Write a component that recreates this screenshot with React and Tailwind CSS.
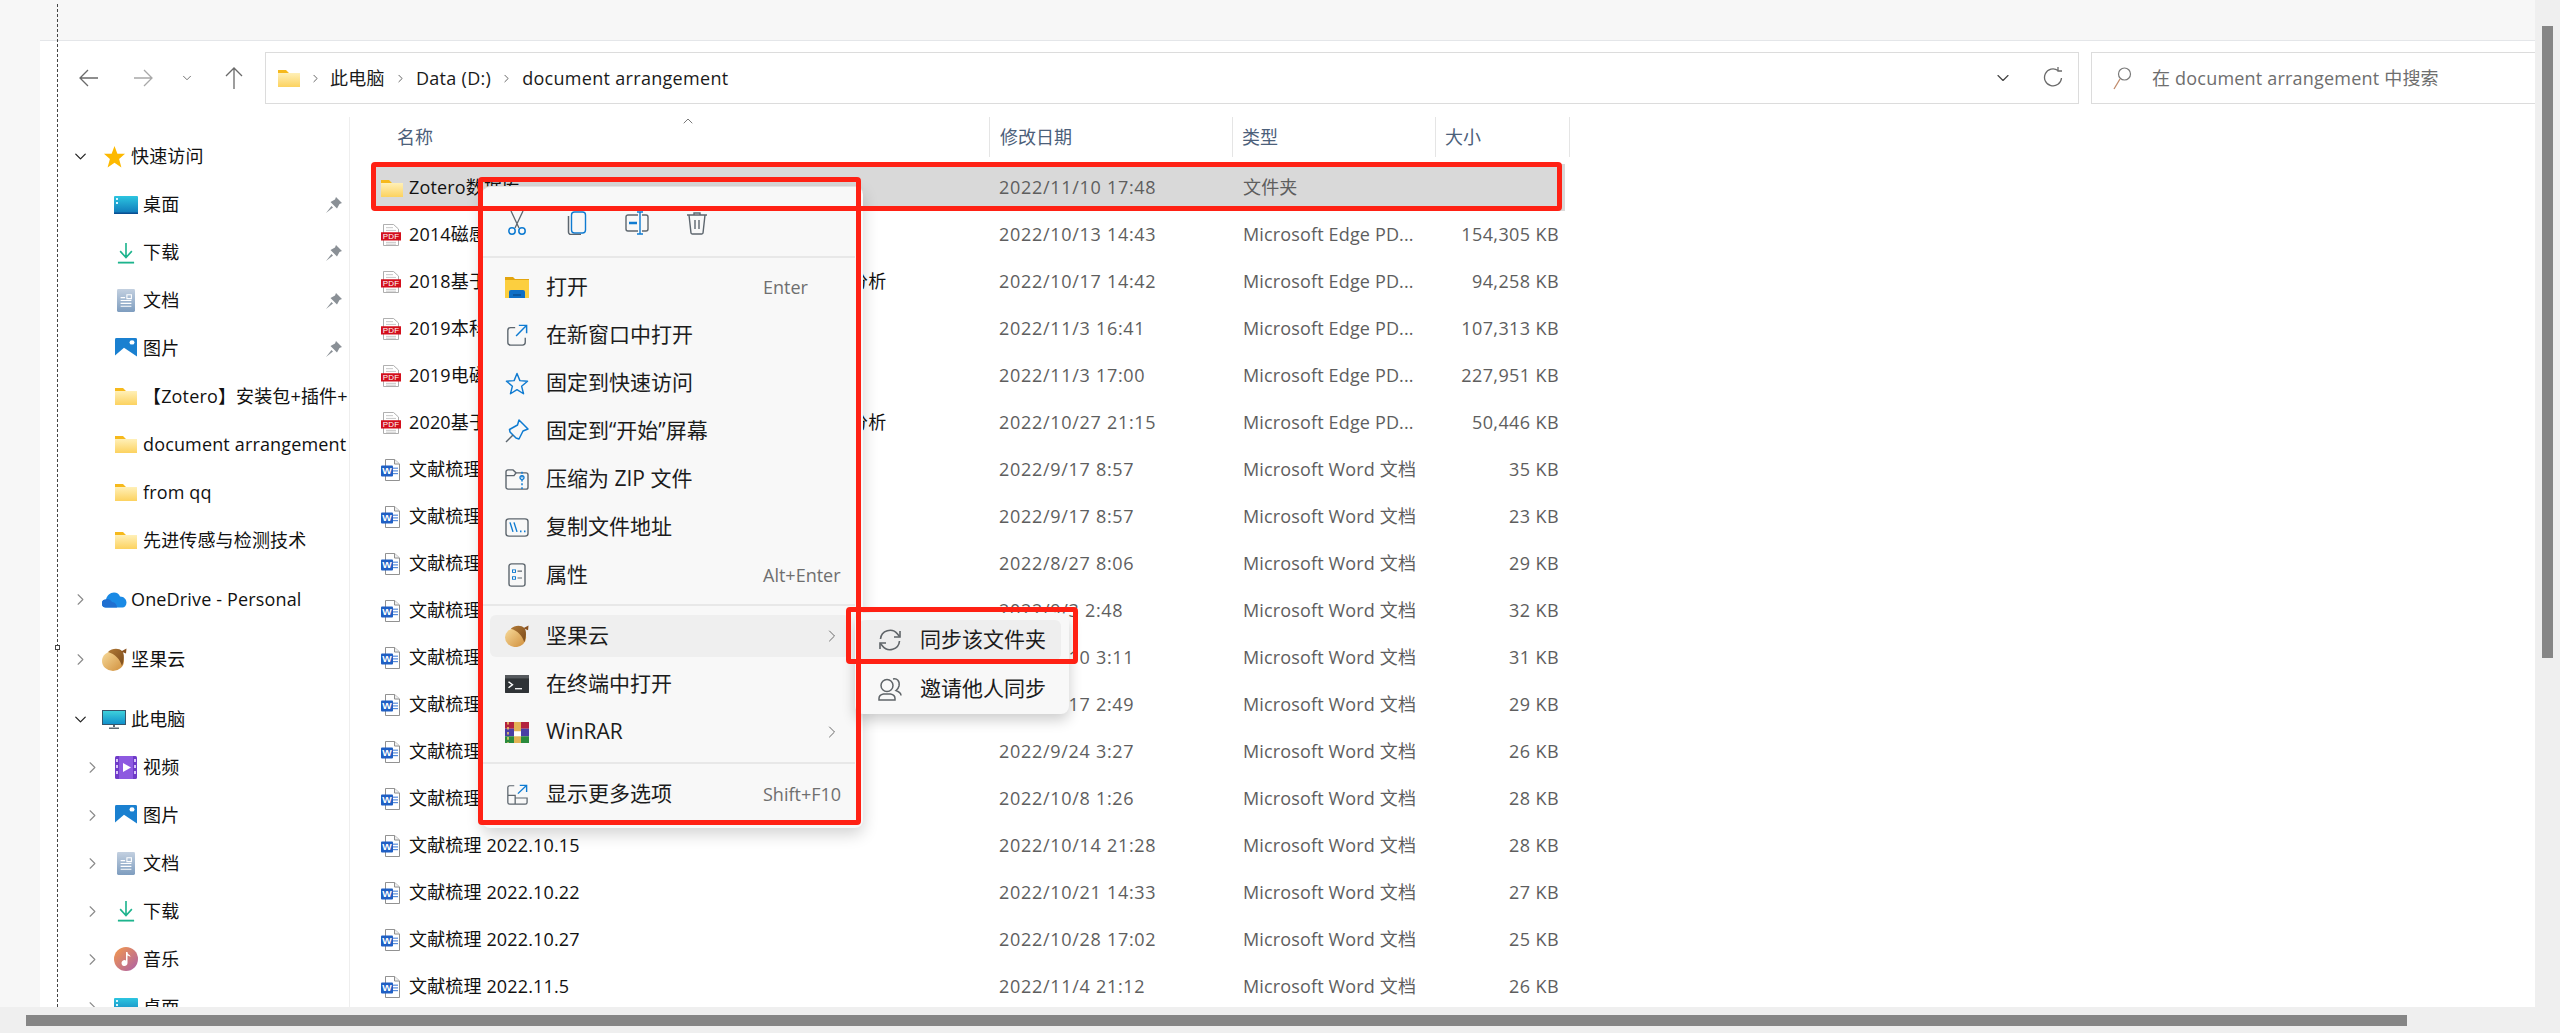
import { ChevronDown, ChevronRight, ChevronUp } from "lucide-react";

const files = [
  ["folder", "Zotero数据库", "2022/11/10 17:48", "文件夹", ""],
  ["pdf", "2014磁感应成像技术综述", "2022/10/13 14:43", "Microsoft Edge PD...", "154,305 KB"],
  ["pdf", "2018基于文献计量学的电磁无损检测技术研究进展趋势分析", "2022/10/17 14:42", "Microsoft Edge PD...", "94,258 KB"],
  ["pdf", "2019本科毕业论文", "2022/11/3 16:41", "Microsoft Edge PD...", "107,313 KB"],
  ["pdf", "2019电磁层析成像", "2022/11/3 17:00", "Microsoft Edge PD...", "227,951 KB"],
  ["pdf", "2020基于文献计量学的电磁无损检测技术研究进展趋势分析", "2022/10/27 21:15", "Microsoft Edge PD...", "50,446 KB"],
  ["word", "文献梳理 2022.9.3", "2022/9/17 8:57", "Microsoft Word 文档", "35 KB"],
  ["word", "文献梳理 2022.9.10", "2022/9/17 8:57", "Microsoft Word 文档", "23 KB"],
  ["word", "文献梳理 2022.8.27", "2022/8/27 8:06", "Microsoft Word 文档", "29 KB"],
  ["word", "文献梳理 2022.9.3", "2022/9/3 2:48", "Microsoft Word 文档", "32 KB"],
  ["word", "文献梳理 2022.9.10", "2022/9/10 3:11", "Microsoft Word 文档", "31 KB"],
  ["word", "文献梳理 2022.9.17", "2022/9/17 2:49", "Microsoft Word 文档", "29 KB"],
  ["word", "文献梳理 2022.9.24", "2022/9/24 3:27", "Microsoft Word 文档", "26 KB"],
  ["word", "文献梳理 2022.10.8", "2022/10/8 1:26", "Microsoft Word 文档", "28 KB"],
  ["word", "文献梳理 2022.10.15", "2022/10/14 21:28", "Microsoft Word 文档", "28 KB"],
  ["word", "文献梳理 2022.10.22", "2022/10/21 14:33", "Microsoft Word 文档", "27 KB"],
  ["word", "文献梳理 2022.10.27", "2022/10/28 17:02", "Microsoft Word 文档", "25 KB"],
  ["word", "文献梳理 2022.11.5", "2022/11/4 21:12", "Microsoft Word 文档", "26 KB"],
];

function FolderIcon({ className = "" }) {
  return (
    <svg width="22" height="18" viewBox="0 0 22 18" className={className}>
      <defs>
        <linearGradient id="folderFront" x1="0" y1="0" x2="0" y2="1">
          <stop offset="0" stopColor="#fff0b8" />
          <stop offset="1" stopColor="#fcd25f" />
        </linearGradient>
      </defs>
      <path d="M0 1h8l3 3h11v14H0z" fill="#f6b91c" />
      <rect x="0" y="4" width="22" height="14" fill="url(#folderFront)" />
    </svg>
  );
}

function PdfIcon() {
  return (
    <svg width="20" height="22" viewBox="0 0 20 24" preserveAspectRatio="none">
      <path d="M2.500.5h10l5 5v18h-15z" fill="#fff" stroke="#a9a9a9" />
      <path d="M5 4h7M5 7h10M5 20h10M5 22h10" stroke="#c4c4c4" />
      <rect x="0" y="9" width="20" height="9" fill="#d30f1c" />
      <text x="10" y="16.600" textAnchor="middle" fontSize="8" fontFamily="Liberation Sans" fill="#fff">PDF</text>
    </svg>
  );
}

function WordIcon() {
  return (
    <svg width="20" height="22" viewBox="0 0 20 24" preserveAspectRatio="none">
      <path d="M4.500.5h9l5 5v18h-14z" fill="#fff" stroke="#8a8a8a" />
      <path d="M13.500.5v5h5" fill="#eee" stroke="#8a8a8a" />
      <path d="M12 10h5M12 13h5M12 16h5" stroke="#2f6fd0" />
      <rect x="0" y="7" width="12" height="12" rx="1" fill="#1f5fc4" />
      <text x="6" y="16.600" textAnchor="middle" fontSize="10" fontWeight="700" fontFamily="Liberation Sans" fill="#fff">W</text>
    </svg>
  );
}

function StarIcon() {
  return (
    <svg width="23" height="23" viewBox="0 0 24 24">
      <path d="M12 1l3 8h8l-6.200 5.500 2.400 9L12 18.500 4.800 23.500l2.400-9L1 9h8z" fill="#fdb900" />
    </svg>
  );
}

function DesktopIcon() {
  return (
    <svg width="24" height="18" viewBox="0 0 24 18">
      <defs>
        <linearGradient id="deskFill" x1="0" y1="0" x2="0" y2="1">
          <stop offset="0" stopColor="#2cc5e0" />
          <stop offset="1" stopColor="#0f76b8" />
        </linearGradient>
      </defs>
      <rect width="24" height="18" rx="1" fill="url(#deskFill)" />
      <path d="M2 2h2v2H2zM2 6h2v2H2z" fill="#d8f6ff" />
      <rect y="16.500" width="24" height="1.500" fill="#0a4f92" />
    </svg>
  );
}

function DownloadIcon() {
  return (
    <svg width="18" height="22" viewBox="0 0 20 24" fill="none" preserveAspectRatio="none">
      <path d="M10 1v15M3.500 10l6.500 7 6.500-7" stroke="#1db48d" strokeWidth="1.800" />
      <path d="M1 22.500h18" stroke="#1db48d" strokeWidth="2" />
    </svg>
  );
}

function DocIcon() {
  return (
    <svg width="18" height="23" viewBox="0 0 20 24" preserveAspectRatio="none">
      <defs>
        <linearGradient id="docFill" x1="0" y1="0" x2="0" y2="1">
          <stop offset="0" stopColor="#c3d0e0" />
          <stop offset="1" stopColor="#7e9dbf" />
        </linearGradient>
      </defs>
      <rect width="20" height="24" rx="1.500" fill="url(#docFill)" />
      <path d="M4 9h5M4 12h12M4 15h12M4 18h12M11 6h5v4h-5z" stroke="#fff" strokeWidth="1.200" fill="none" />
    </svg>
  );
}

function PictureIcon() {
  return (
    <svg width="22" height="21" viewBox="0 0 22 24" preserveAspectRatio="none">
      <rect width="22" height="24" rx="1.500" fill="#1a80d0" />
      <circle cx="17" cy="5" r="2.500" fill="#fff" />
      <path d="M0 24v-4l9-9 13 10v3z" fill="#fff" />
    </svg>
  );
}

function PinIcon() {
  return (
    <svg width="16" height="16" viewBox="0 0 16 16">
      <path d="M10 0l6 6-2.500 1L11 11.500 4.500 5 9 2.500zM5.500 9L0 16l7-5.500z" fill="#8a9096" />
    </svg>
  );
}

function CloudIcon() {
  return (
    <svg width="25" height="16" viewBox="0 0 25 16">
      <path d="M4 15.500a4 4 0 0 1 0-8c1-4 4-7 8-7 3 0 5 1.500 6 4 4 0 6.500 3 6.500 6 0 3-2 5-4 5z" fill="#1a8ae5" />
      <path d="M4 15.500a4 4 0 0 1-.5-8C6 6 9 8 10 10c3 0 5 3 5 5.500z" fill="#1f6fd0" />
    </svg>
  );
}

function AcornIcon({ size = 25 }) {
  return (
    <svg width={size} height={size * 0.92} viewBox="0 0 25 23">
      <defs>
        <linearGradient id="acornBody" x1="0" y1="0" x2="1" y2="1">
          <stop offset="0" stopColor="#f8dc9c" />
          <stop offset="1" stopColor="#cf8d3a" />
        </linearGradient>
        <linearGradient id="acornCap" x1="0" y1="0" x2="1" y2="1">
          <stop offset="0" stopColor="#b27a36" />
          <stop offset="1" stopColor="#7a4a1c" />
        </linearGradient>
      </defs>
      <ellipse cx="11" cy="13" rx="11" ry="10" fill="url(#acornBody)" />
      <path d="M6 4C10 0 17 0 20 3c3 3 2 10 0 15C18 11 13 6 6 4z" fill="url(#acornCap)" />
      <path d="M19 3.500l5.500-3-.5 5z" fill="#8a5220" />
    </svg>
  );
}

function MonitorIcon() {
  return (
    <svg width="24" height="19" viewBox="0 0 24 19">
      <defs>
        <linearGradient id="screenFill" x1="0" y1="0" x2="0" y2="1">
          <stop offset="0" stopColor="#3fd3dc" />
          <stop offset="1" stopColor="#0f8ecb" />
        </linearGradient>
      </defs>
      <rect x=".5" y=".5" width="23" height="14" fill="url(#screenFill)" stroke="#35556b" />
      <path d="M11 15h2v2h-2zM7 17.500h10V19H7z" fill="#5a6772" />
    </svg>
  );
}

function VideoIcon() {
  return (
    <svg width="22" height="23" viewBox="0 0 22 23">
      <rect width="22" height="23" rx="1.500" fill="#6f3bc8" />
      <rect x="4" y="0" width="14" height="23" fill="#8d59e0" />
      <path d="M1 3h2v3H1zM1 9h2v3H1zM1 15h2v3H1zM19 3h2v3h-2zM19 9h2v3h-2zM19 15h2v3h-2z" fill="#d9c6f8" />
      <path d="M8 7l8 4.500-8 4.500z" fill="#fff" />
    </svg>
  );
}

function MusicIcon() {
  return (
    <svg width="24" height="24" viewBox="0 0 24 24">
      <defs>
        <linearGradient id="musicFill" x1="0" y1="0" x2="1" y2="1">
          <stop offset="0" stopColor="#f59a4a" />
          <stop offset="1" stopColor="#ab5fa8" />
        </linearGradient>
      </defs>
      <circle cx="12" cy="12" r="12" fill="url(#musicFill)" />
      <path d="M12 5h1.500c0 3 3 2.500 3 5-1-1-2-1.500-3-1.500V16a3 3 0 1 1-1.500-2.500z" fill="#fff" />
    </svg>
  );
}

const tone = { stroke: "#5d666e", blue: "#0f7bd1" };

function ScissorsIcon() {
  return (
    <svg width="24" height="24" viewBox="0 0 24 24" fill="none">
      <path d="M10 17L18 0M14 17L6 0" stroke={tone.stroke} strokeWidth="1.300" />
      <circle cx="7" cy="20" r="3.200" stroke={tone.blue} strokeWidth="1.500" />
      <circle cx="17" cy="20" r="3.200" stroke={tone.blue} strokeWidth="1.500" />
    </svg>
  );
}

function CopyIcon() {
  return (
    <svg width="24" height="24" viewBox="0 0 24 24" fill="none">
      <rect x="6.500" y="1" width="14" height="21" rx="3" stroke={tone.blue} strokeWidth="1.400" />
      <path d="M3.500 5v16a2.500 2.500 0 0 0 2.500 2.500h10" stroke={tone.stroke} strokeWidth="1.500" />
    </svg>
  );
}

function RenameIcon() {
  return (
    <svg width="24" height="24" viewBox="0 0 24 24" fill="none">
      <path d="M13 4H3a2 2 0 0 0-2 2v12a2 2 0 0 0 2 2h10M17 4h4a2 2 0 0 1 2 2v12a2 2 0 0 1-2 2h-4" stroke={tone.stroke} strokeWidth="1.400" />
      <path d="M15 1v22M12 1h6M12 23h6" stroke={tone.blue} strokeWidth="1.400" />
      <path d="M4 12h8" stroke={tone.blue} strokeWidth="2.500" />
    </svg>
  );
}

function TrashIcon() {
  return (
    <svg width="24" height="24" viewBox="0 0 24 24" fill="none" stroke={tone.stroke} strokeWidth="1.400">
      <path d="M2 4h20M9 4V2h6v2M4 4l2 18a1.500 1.500 0 0 0 1.500 1h9a1.500 1.500 0 0 0 1.500-1l2-18M10 9v9M14 9v9" />
    </svg>
  );
}

function OpenIcon() {
  return (
    <svg width="24" height="21" viewBox="0 0 24 21">
      <path d="M0 0h8l2 2h14v4H0z" fill="#e3a50f" />
      <rect y="3" width="24" height="18" fill="#fccf3f" />
      <path d="M4 21v-6a2 2 0 0 1 2-2h12a2 2 0 0 1 2 2v6z" fill="#0f6fc6" />
      <path d="M8 18h8" stroke="#0a4f92" strokeWidth="1.500" />
    </svg>
  );
}

function NewWindowIcon() {
  return (
    <svg width="22" height="22" viewBox="0 0 24 24" fill="none" className="ml-[1px]">
      <path d="M10 4H5a3 3 0 0 0-3 3v13a3 3 0 0 0 3 3h13a3 3 0 0 0 3-3v-5" stroke={tone.stroke} strokeWidth="1.500" />
      <path d="M11 13L22 2M14 1.500h8.500V10" stroke={tone.blue} strokeWidth="1.600" />
    </svg>
  );
}

function StarOutlineIcon() {
  return (
    <svg width="24" height="23" viewBox="0 0 24 24" fill="none">
      <path d="M12 1.500l3 7.500 8 .6-6.200 5.200 2 7.900-6.800-4.300-6.800 4.300 2-7.900L1 9.600 9 9z" stroke={tone.blue} strokeWidth="1.500" strokeLinejoin="round" />
    </svg>
  );
}

function PinOutlineIcon() {
  return (
    <svg width="24" height="24" viewBox="0 0 24 24" fill="none">
      <path d="M14 1l9 9-5 2-4 8-3-1-6-6-.5-2.500 8-4.500z" stroke={tone.blue} strokeWidth="1.500" strokeLinejoin="round" />
      <path d="M8 16l-7 7" stroke={tone.stroke} strokeWidth="1.500" />
    </svg>
  );
}

function ZipIcon() {
  return (
    <svg width="24" height="21" viewBox="0 0 24 22" fill="none" preserveAspectRatio="none">
      <path d="M1 3a2 2 0 0 1 2-2h5l3 3h10a2 2 0 0 1 2 2v13a2 2 0 0 1-2 2H3a2 2 0 0 1-2-2z" stroke={tone.stroke} strokeWidth="1.400" />
      <path d="M1 7h8l2-3" stroke={tone.stroke} strokeWidth="1.400" />
      <path d="M17 3v18" stroke={tone.blue} strokeWidth="1.500" strokeDasharray="2 2" />
      <circle cx="17" cy="9" r="2" stroke={tone.blue} strokeWidth="1.300" />
    </svg>
  );
}

function PathIcon() {
  return (
    <svg width="24" height="19" viewBox="0 0 24 22" fill="none" preserveAspectRatio="none">
      <rect x="1" y="1" width="22" height="20" rx="3" stroke={tone.stroke} strokeWidth="1.400" />
      <path d="M5 5l3 11M9 5l3 11" stroke={tone.blue} strokeWidth="1.400" />
      <path d="M15 15.500h1.500M19 15.500h1.500" stroke={tone.blue} strokeWidth="1.800" />
    </svg>
  );
}

function PropsIcon() {
  return (
    <svg width="24" height="24" viewBox="0 0 24 28" fill="none" preserveAspectRatio="none">
      <rect x="4" y="1" width="16" height="26" rx="2.500" stroke={tone.stroke} strokeWidth="1.400" />
      <rect x="7.500" y="8" width="3" height="3" stroke={tone.blue} />
      <rect x="7.500" y="16" width="3" height="3" stroke={tone.blue} />
      <path d="M12.500 9.500h4.500M12.500 17.500h4.500" stroke={tone.stroke} strokeWidth="1.300" />
    </svg>
  );
}

function TerminalIcon() {
  return (
    <svg width="24" height="18" viewBox="0 0 24 21" fill="none" preserveAspectRatio="none">
      <rect width="24" height="21" rx="1" fill="#2f3336" />
      <rect width="24" height="4" fill="#55595d" />
      <path d="M3.500 8l4 3.500-4 3.500" stroke="#fff" strokeWidth="1.500" />
      <path d="M10 16h7" stroke="#fff" strokeWidth="1.500" />
    </svg>
  );
}

function WinrarIcon() {
  return (
    <svg width="24" height="21" viewBox="0 0 24 25" preserveAspectRatio="none">
      <rect width="24" height="8" fill="#b3223e" />
      <rect y="8" width="24" height="9" fill="#4a3fa5" />
      <rect y="17" width="24" height="8" fill="#2a8a3c" />
      <rect x="9" width="7" height="25" fill="#e3b255" />
      <rect x="9" y="11" width="7" height="6" fill="#fff" />
      <path d="M3 0v25" stroke="#f3d36b" strokeWidth="1.500" strokeDasharray="3 3" />
    </svg>
  );
}

function MoreIcon() {
  return (
    <svg width="22" height="21" viewBox="0 0 24 24" fill="none" preserveAspectRatio="none" className="ml-[1px]">
      <path d="M9 2H4a2 2 0 0 0-2 2v17a2 2 0 0 0 2 2h17a2 2 0 0 0 2-2v-5H10v7M2 13h8v3" stroke={tone.stroke} strokeWidth="1.400" />
      <path d="M13 11l9-9M15 1.500h7.500V9" stroke={tone.blue} strokeWidth="1.500" />
    </svg>
  );
}

function SyncIcon() {
  return (
    <svg width="24" height="24" viewBox="0 0 24 24" fill="none" stroke="#5f6468" strokeWidth="1.600">
      <path d="M2.500 11a9.500 9.500 0 0 1 17-5l2 2.500M21.500 13a9.500 9.500 0 0 1-17 5l-2-2.500" />
      <path d="M22 3v6h-6M2 21v-6h6" />
    </svg>
  );
}

function PeopleIcon() {
  return (
    <svg width="24" height="24" viewBox="0 0 24 24" fill="none" stroke="#5f6468" strokeWidth="1.500">
      <circle cx="9" cy="8.500" r="6" />
      <path d="M1 23v-1.500c0-2.500 2-4 4.500-4.500h7c2.500.5 4.500 2 4.500 4.500V23zM15 2c4-1 7 2 6 7-.5 2-1.500 3.500-3 4.500 2.500 1 5 2 5 5" />
    </svg>
  );
}

function NavRow({ depth = 0, chevron, icon, label, pin, gapTop }) {
  const padding = depth === 0 ? "pl-[30px]" : "pl-[42px]";
  return (
    <div className={`flex h-[47.9px] items-center whitespace-nowrap text-[18px] tracking-[0.15px] text-[#111] ${padding} ${gapTop ? "mt-[12px]" : ""}`}>
      <span className="flex w-[20px] shrink-0 justify-center">
        {chevron === "open" && <ChevronDown size={19} strokeWidth={1.6} className="text-[#222]" />}
        {chevron === "closed" && <ChevronRight size={19} strokeWidth={1.4} className="text-[#8a8a8a]" />}
      </span>
      <span className="flex w-[41px] shrink-0 justify-end pr-[4px]">
        <span className="flex w-[26px] items-center justify-center">{icon}</span>
      </span>
      {pin ? (
        <>
          <span className="w-[183px]">{label}</span>
          <PinIcon />
        </>
      ) : (
        <span className="w-[205px] overflow-hidden">{label}</span>
      )}
    </div>
  );
}

function Sidebar() {
  return (
    <div className="h-full w-[310px] shrink-0 overflow-hidden border-r border-[#eeeeee] pt-[16px]">
      <NavRow chevron="open" icon={<StarIcon />} label="快速访问" />
      <NavRow depth={1} icon={<DesktopIcon />} label="桌面" pin />
      <NavRow depth={1} icon={<DownloadIcon />} label="下载" pin />
      <NavRow depth={1} icon={<DocIcon />} label="文档" pin />
      <NavRow depth={1} icon={<PictureIcon />} label="图片" pin />
      <NavRow depth={1} icon={<FolderIcon />} label="【Zotero】安装包+插件+教程" />
      <NavRow depth={1} icon={<FolderIcon />} label="document arrangement" />
      <NavRow depth={1} icon={<FolderIcon />} label="from qq" />
      <NavRow depth={1} icon={<FolderIcon />} label="先进传感与检测技术" />
      <NavRow gapTop chevron="closed" icon={<CloudIcon />} label="OneDrive - Personal" />
      <NavRow gapTop chevron="closed" icon={<AcornIcon />} label="坚果云" />
      <NavRow gapTop chevron="open" icon={<MonitorIcon />} label="此电脑" />
      <NavRow depth={1} chevron="closed" icon={<VideoIcon />} label="视频" />
      <NavRow depth={1} chevron="closed" icon={<PictureIcon />} label="图片" />
      <NavRow depth={1} chevron="closed" icon={<DocIcon />} label="文档" />
      <NavRow depth={1} chevron="closed" icon={<DownloadIcon />} label="下载" />
      <NavRow depth={1} chevron="closed" icon={<MusicIcon />} label="音乐" />
      <NavRow depth={1} chevron="closed" icon={<DesktopIcon />} label="桌面" />
    </div>
  );
}

function FileRow({ file, selected }) {
  const [kind, name, date, type, size] = file;
  return (
    <div className={`flex h-[47px] w-[1191px] items-center whitespace-nowrap text-[18px] ${selected ? "bg-[#d9d9d9]" : ""}`}>
      <div className="flex w-[615px] shrink-0 items-center tracking-[0.15px] text-[#111]">
        <span className="ml-[7px] flex w-[28px] shrink-0">
          {kind === "folder" && <FolderIcon />}
          {kind === "pdf" && <PdfIcon />}
          {kind === "word" && <WordIcon />}
        </span>
        {name}
      </div>
      <div className="w-[243px] shrink-0 pl-[10px] tracking-[0.7px] text-[#5e5e5e]">{date}</div>
      <div className="w-[203px] shrink-0 pl-[11px] tracking-[0.15px] text-[#5e5e5e]">{type}</div>
      <div className="w-[130px] shrink-0 pr-[6px] text-right tracking-[0.4px] text-[#5e5e5e]">{size}</div>
    </div>
  );
}

function FileList() {
  return (
    <div className="relative min-w-0 flex-1 pl-[24px]">
      <ChevronUp size={16} strokeWidth={1.2} className="absolute left-[330px] top-[-4px] text-[#555]" />
      <div className="mb-[7px] flex h-[40px] w-[1196px] items-center text-[18px] text-[#4c607a]">
        <div className="w-[615px] pl-[23px]">名称</div>
        <div className="h-full w-[243px] border-l border-[#e5e5e5] pl-[10px] leading-[40px]">修改日期</div>
        <div className="h-full w-[203px] border-l border-[#e5e5e5] pl-[9px] leading-[40px]">类型</div>
        <div className="h-full w-[135px] border-x border-[#e5e5e5] pl-[9px] leading-[40px]">大小</div>
      </div>
      {files.map((file, i) => (
        <FileRow key={i} file={file} selected={i === 0} />
      ))}
    </div>
  );
}

function Toolbar() {
  return (
    <div className="flex h-[63px] shrink-0 items-start pt-[11px] text-[#1a1a1a]">
      <div className="flex h-[52px] w-[225px] shrink-0 items-center text-[#6a6a6a]">
        <svg width="20" height="20" viewBox="0 0 20 20" fill="none" stroke="currentColor" strokeWidth="1.300" className="ml-[39px]">
          <path d="M19 10H1M9 2l-8 8 8 8" />
        </svg>
        <svg width="20" height="20" viewBox="0 0 20 20" fill="none" stroke="#a8a8a8" strokeWidth="1.300" className="ml-[34px]">
          <path d="M1 10h18M11 2l8 8-8 8" />
        </svg>
        <ChevronDown size={14} strokeWidth={1.4} className="ml-[27px] text-[#555]" />
        <svg width="20" height="22" viewBox="0 0 20 22" fill="none" stroke="currentColor" strokeWidth="1.300" className="ml-[30px]">
          <path d="M10 22V1M2 9l8-8 8 8" />
        </svg>
      </div>
      <div className="flex h-[52px] w-[1814px] shrink-0 items-center border border-[#dcdcdc] pl-[12px] text-[18px] tracking-[0.3px]">
        <FolderIcon />
        <ChevronRight size={13} strokeWidth={1.5} className="ml-[9px] text-[#444]" />
        <span className="ml-[8px]">此电脑</span>
        <ChevronRight size={13} strokeWidth={1.5} className="ml-[9px] text-[#444]" />
        <span className="ml-[9px]">Data (D:)</span>
        <ChevronRight size={13} strokeWidth={1.5} className="ml-[9px] text-[#444]" />
        <span className="ml-[9px]">document arrangement</span>
        <ChevronDown size={20} strokeWidth={1.4} className="ml-auto text-[#444]" />
        <svg width="20" height="22" viewBox="0 0 20 22" fill="none" stroke="#6a6a6a" strokeWidth="1.300" className="ml-[30px] mr-[15px]">
          <path d="M15 3.500A8.500 8.500 0 1 0 18.500 11M15 0v4h4" />
        </svg>
      </div>
      <div className="ml-[12px] flex h-[52px] min-w-0 flex-1 items-center border border-r-0 border-[#dcdcdc] pl-[21px] text-[18px] tracking-[0.2px] text-[#6e6e6e]">
        <svg width="19" height="24" viewBox="0 0 19 24" fill="none">
          <circle cx="11.500" cy="8" r="6" stroke="#7a7a7a" strokeWidth="1.200" />
          <path d="M7 13L1 23" stroke="#c08a6a" strokeWidth="1.300" />
        </svg>
        <span className="ml-[20px] whitespace-nowrap">在 document arrangement 中搜索</span>
      </div>
    </div>
  );
}

function MenuItem({ icon, label, shortcut, arrow, active }) {
  return (
    <div className="py-[3px]">
      <div className={`flex h-[42px] items-center rounded-[6px] pl-[15px] text-[21px] text-[#1c1c1c] ${active ? "bg-[#efefef]" : ""}`}>
        <span className="flex w-[41px] shrink-0 items-center">{icon}</span>
        <span className="whitespace-nowrap">{label}</span>
        {shortcut && <span className="ml-auto w-[87px] shrink-0 whitespace-nowrap text-[18px] text-[#6f6f6f]">{shortcut}</span>}
        {arrow && <ChevronRight size={20} strokeWidth={1.2} className="ml-auto mr-[8px] text-[#6a6a6a]" />}
      </div>
    </div>
  );
}

function ContextMenu() {
  return (
    <div className="absolute left-[482px] top-[186px] z-20 h-[642px] w-[381px] rounded-[8px] border-t border-[#e3e3e3] bg-[#f8f8f8] shadow-[0_6px_16px_rgba(0,0,0,0.18)]">
      <div className="flex h-[69px] items-start gap-[36px] pl-[23px] pt-[24px]">
        <ScissorsIcon />
        <CopyIcon />
        <RenameIcon />
        <TrashIcon />
      </div>
      <div className="h-[2px] w-[373px] bg-[#e8e8e8]" />
      <div className="pl-[8px] pr-[13px] pt-[5px]">
        <MenuItem icon={<OpenIcon />} label="打开" shortcut="Enter" />
        <MenuItem icon={<NewWindowIcon />} label="在新窗口中打开" />
        <MenuItem icon={<StarOutlineIcon />} label="固定到快速访问" />
        <MenuItem icon={<PinOutlineIcon />} label="固定到“开始”屏幕" />
        <MenuItem icon={<ZipIcon />} label="压缩为 ZIP 文件" />
        <MenuItem icon={<PathIcon />} label="复制文件地址" />
        <MenuItem icon={<PropsIcon />} label="属性" shortcut="Alt+Enter" />
      </div>
      <div className="mt-[5px] h-[2px] w-[373px] bg-[#e8e8e8]" />
      <div className="pl-[8px] pr-[13px] pt-[6px]">
        <MenuItem icon={<AcornIcon size={24} />} label="坚果云" arrow active />
        <MenuItem icon={<TerminalIcon />} label="在终端中打开" />
        <MenuItem icon={<WinrarIcon />} label="WinRAR" arrow />
      </div>
      <div className="mt-[6px] h-[2px] w-[373px] bg-[#e8e8e8]" />
      <div className="pl-[8px] pr-[13px] pt-[6px]">
        <MenuItem icon={<MoreIcon />} label="显示更多选项" shortcut="Shift+F10" />
      </div>
    </div>
  );
}

function SubMenu() {
  return (
    <div className="absolute left-[855px] top-[613px] z-30 h-[101px] w-[214px] rounded-[8px] bg-[#f8f8f8] pl-[4px] pr-[8px] pt-[7px] text-[21px] text-[#1c1c1c] shadow-[0_6px_14px_rgba(0,0,0,0.2)]">
      <div className="flex h-[40px] items-center rounded-[6px] bg-[#eeeeee] pl-[19px]">
        <span className="flex w-[42px] shrink-0"><SyncIcon /></span>
        同步该文件夹
      </div>
      <div className="mt-[9px] flex h-[40px] items-center pl-[19px]">
        <span className="flex w-[42px] shrink-0"><PeopleIcon /></span>
        邀请他人同步
      </div>
    </div>
  );
}

export default function App() {
  return (
    <div className="relative flex h-[1033px] w-[2560px] overflow-hidden bg-[#f7f7f7] font-['Open_Sans','Noto_Sans_CJK_SC',sans-serif]">
      <div className="flex min-w-0 flex-1 flex-col">
        <div className="min-h-0 flex-1 pl-[40px] pt-[40px]">
          <div className="flex h-full flex-col overflow-hidden border-t border-[#e4e6e9] bg-white">
            <Toolbar />
            <div className="mt-[13px] flex min-h-0 flex-1">
              <Sidebar />
              <FileList />
            </div>
          </div>
        </div>
        <div className="h-[26px] shrink-0 bg-[#efefef] pl-[26px] pt-[8px]">
          <div className="h-[11px] w-[2381px] bg-[#868686]" />
        </div>
      </div>
      <div className="w-[25px] shrink-0 bg-[#efefef] pl-[7px] pt-[26px]">
        <div className="h-[632px] w-[11px] bg-[#868686]" />
      </div>

      {/* selection guide of the page editor */}
      <div className="absolute bottom-[26px] left-[57px] top-[4px] border-l border-dashed border-[#444]" />
      <div className="absolute left-[55px] top-[645px] h-[5px] w-[5px] border border-[#444] bg-white" />

      <ContextMenu />
      <SubMenu />

      {/* red annotation frames */}
      <div className="absolute left-[371px] top-[162px] z-40 h-[49px] w-[1191px] rounded-[4px] border-[5px] border-[#ff2114]" />
      <div className="absolute left-[478px] top-[177px] z-40 h-[648px] w-[383px] rounded-[4px] border-[5px] border-[#ff2114]" />
      <div className="absolute left-[846px] top-[607px] z-40 h-[57px] w-[232px] rounded-[4px] border-[5px] border-[#ff2114]" />
    </div>
  );
}
